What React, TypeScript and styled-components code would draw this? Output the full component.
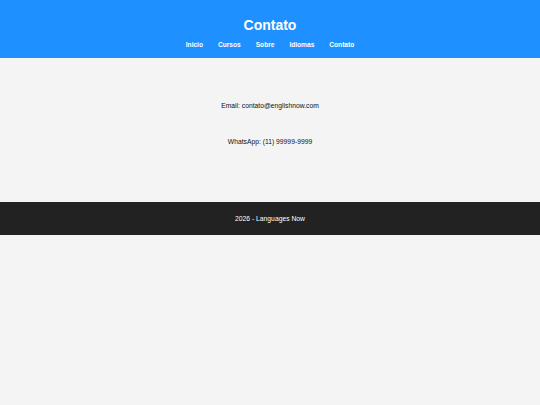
import {createGlobalStyle, styled} from "styled-components";

const GlobalStyle = createGlobalStyle`
    html, body {
        margin: 0;
        padding: 0;
        background: #f4f4f4;
        font-family: "Liberation Sans", Arial, sans-serif;
    }
`;

const Header = styled.header`
    background-color: #1e90ff;
    color: #fff;
    text-align: center;
    padding: 17px 0 9px;
`;

const Title = styled.h1`
    margin: 0 0 8px;
    font-size: 14px;
    line-height: 16px;
    font-weight: 700;
`;

const Nav = styled.nav`
    display: flex;
    justify-content: center;
    gap: 15px;
`;

const NavLink = styled.a`
    color: #fff;
    text-decoration: none;
    font-size: 6.6px;
    line-height: 8px;
    font-weight: 700;
`;

const Main = styled.main`
    display: flex;
    flex-direction: column;
    align-items: center;
    gap: 28px;
    padding: 44px 0 56px;
`;

const Info = styled.p`
    margin: 0;
    font-size: 6.75px;
    line-height: 8px;
    color: #111;
`;

const Footer = styled.footer`
    background-color: #222;
    color: #fff;
    text-align: center;
    font-size: 6.75px;
    line-height: 8px;
    padding: 12.5px 0;
`;

const links = ['Inicio', 'Cursos', 'Sobre', 'Idiomas', 'Contato'];

export default function App() {
    return (
        <>
            <GlobalStyle/>
            <Header>
                <Title>Contato</Title>
                <Nav>
                    {links.map((l) => (
                        <NavLink key={l} href="#">{l}</NavLink>
                    ))}
                </Nav>
            </Header>
            <Main>
                <Info>Email: contato@englishnow.com</Info>
                <Info>WhatsApp: (11) 99999-9999</Info>
            </Main>
            <Footer>2026 - Languages Now</Footer>
        </>
    );
}
